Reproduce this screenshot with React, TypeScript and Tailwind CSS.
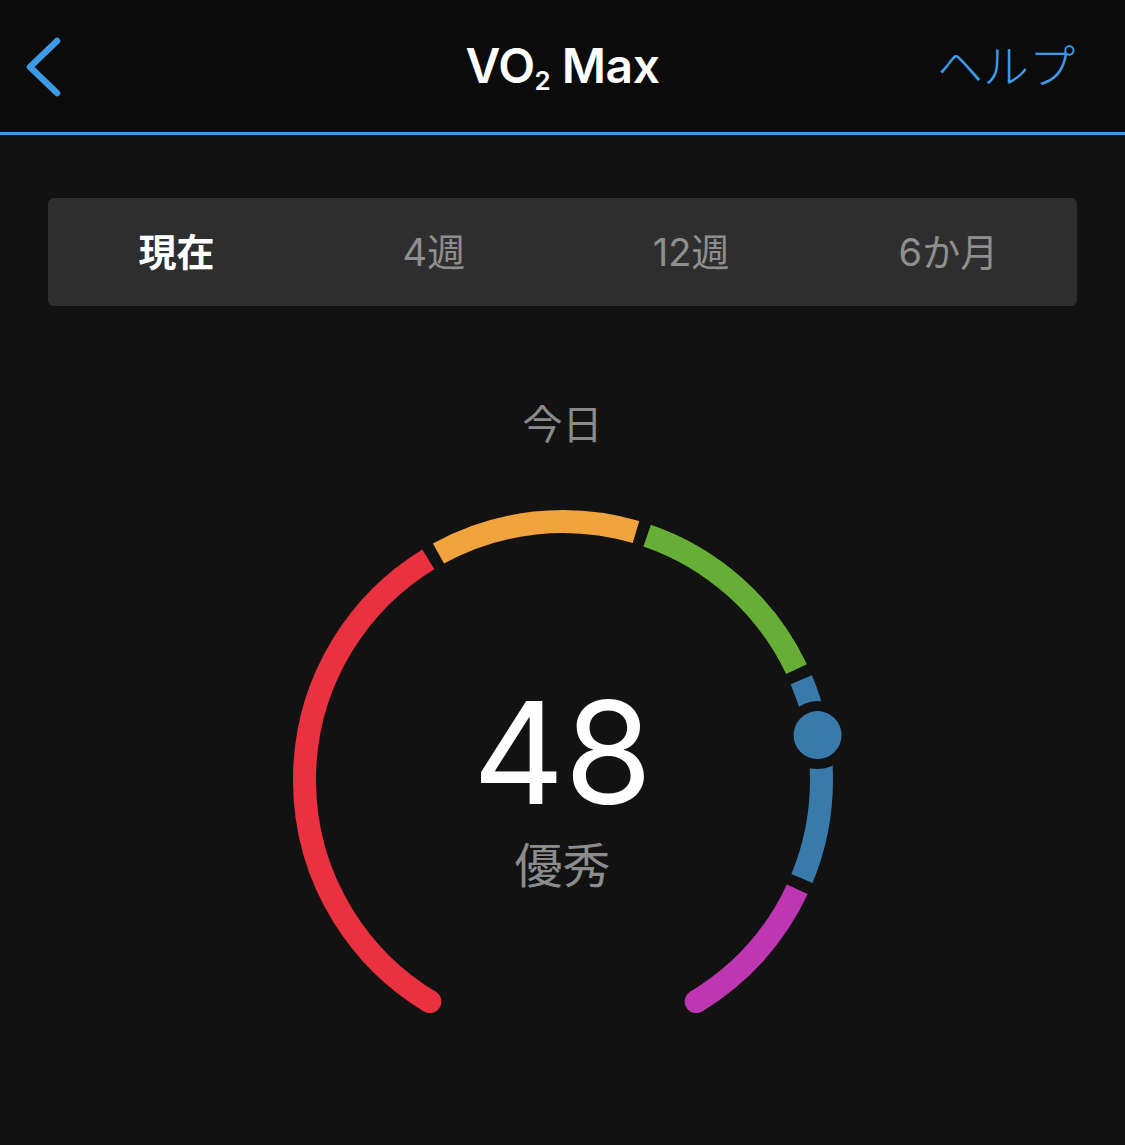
import React from "react";

const SANS = { fontFamily: '"Inter", "Noto Sans CJK JP", sans-serif' };

// Gauge geometry (svg coordinates)
const CX = 300;
const CY = 300;
const R = 258.5;
const STROKE = 23;

// Zones, angles in degrees clockwise from 3 o'clock
const zones = [
  { from: 121, to: 238.6, color: "#e9313f" },
  { from: 241.2, to: 286.4, color: "#f1a33d" },
  { from: 289, to: 334.6, color: "#67ae36" },
  { from: 337.2, to: 382.4, color: "#3a7aab" },
  { from: 385, to: 419, color: "#be36b1" },
];

const tabs = ["現在", "4週", "12週", "6か月"];

function polar(deg: number, r = R) {
  const a = (deg * Math.PI) / 180;
  return [CX + r * Math.cos(a), CY + r * Math.sin(a)];
}

function arcPath(from: number, to: number) {
  const [x0, y0] = polar(from);
  const [x1, y1] = polar(to);
  const large = to - from > 180 ? 1 : 0;
  return `M ${x0} ${y0} A ${R} ${R} 0 ${large} 1 ${x1} ${y1}`;
}

function Gauge({ value, marker }: { value: number; marker: number }) {
  const [sx, sy] = polar(zones[0].from);
  const [ex, ey] = polar(zones[zones.length - 1].to);
  const [mx, my] = polar(marker);
  return (
    <div className="relative w-[600px] h-[600px]">
      <svg width="600" height="600" viewBox="0 0 600 600">
        {zones.map((z) => (
          <path
            key={z.from}
            d={arcPath(z.from, z.to)}
            fill="none"
            stroke={z.color}
            strokeWidth={STROKE}
            strokeLinecap="butt"
          />
        ))}
        {/* rounded outer ends */}
        <circle cx={sx} cy={sy} r={STROKE / 2} fill={zones[0].color} />
        <circle cx={ex} cy={ey} r={STROKE / 2} fill={zones[zones.length - 1].color} />
        {/* current value marker */}
        <circle cx={mx} cy={my} r={34} fill="#121212" />
        <circle cx={mx} cy={my} r={24} fill="#3a7aab" />
      </svg>
      <div
        className="absolute left-0 right-0 top-[201px] text-center text-white text-[142px] leading-none font-normal"
        style={SANS}
      >
        {value}
      </div>
      <div
        className="absolute left-0 right-0 top-[362px] text-center text-[#8c8c8c] text-[48px] leading-none"
        style={SANS}
      >
        優秀
      </div>
    </div>
  );
}

export default function App() {
  return (
    <div className="min-h-screen bg-[#121212] flex flex-col" style={SANS}>
      {/* Top bar */}
      <header className="h-[135px] bg-[#0b0b0b] border-b-[3px] border-[#3d9be6] flex items-center justify-between px-[26px]">
        <svg width="40" height="60" viewBox="0 0 40 60" className="mt-[1px]">
          <path
            d="M31 4 L4 30 L31 56"
            fill="none"
            stroke="#3d9be6"
            strokeWidth="6.5"
            strokeLinecap="round"
            strokeLinejoin="round"
          />
        </svg>
        <h1 className="absolute left-0 right-0 text-center text-white text-[48px] font-semibold tracking-[-0.5px] pointer-events-none">
          VO<sub className="text-[26px] align-baseline relative top-[7px]">2</sub> Max
        </h1>
        <span className="text-[#3d9be6] text-[46px] font-light mr-[24px]">ヘルプ</span>
      </header>

      {/* Range tabs */}
      <div className="mx-[48px] mt-[63px] h-[108px] bg-[#2e2e2e] rounded-[6px] grid grid-cols-4 items-center">
        {tabs.map((t, i) => (
          <div
            key={t}
            className={
              i === 0
                ? "text-center text-white text-[38px] font-bold"
                : "text-center text-[#8e8e8e] text-[38px] font-normal"
            }
          >
            {t}
          </div>
        ))}
      </div>

      <div className="flex flex-col items-center">
        <div className="mt-[95px] text-[40px] leading-[48px] text-[#8a8a8a]">今日</div>
        <div className="mt-[31px]">
          <Gauge value={48} marker={350} />
        </div>
      </div>
    </div>
  );
}
